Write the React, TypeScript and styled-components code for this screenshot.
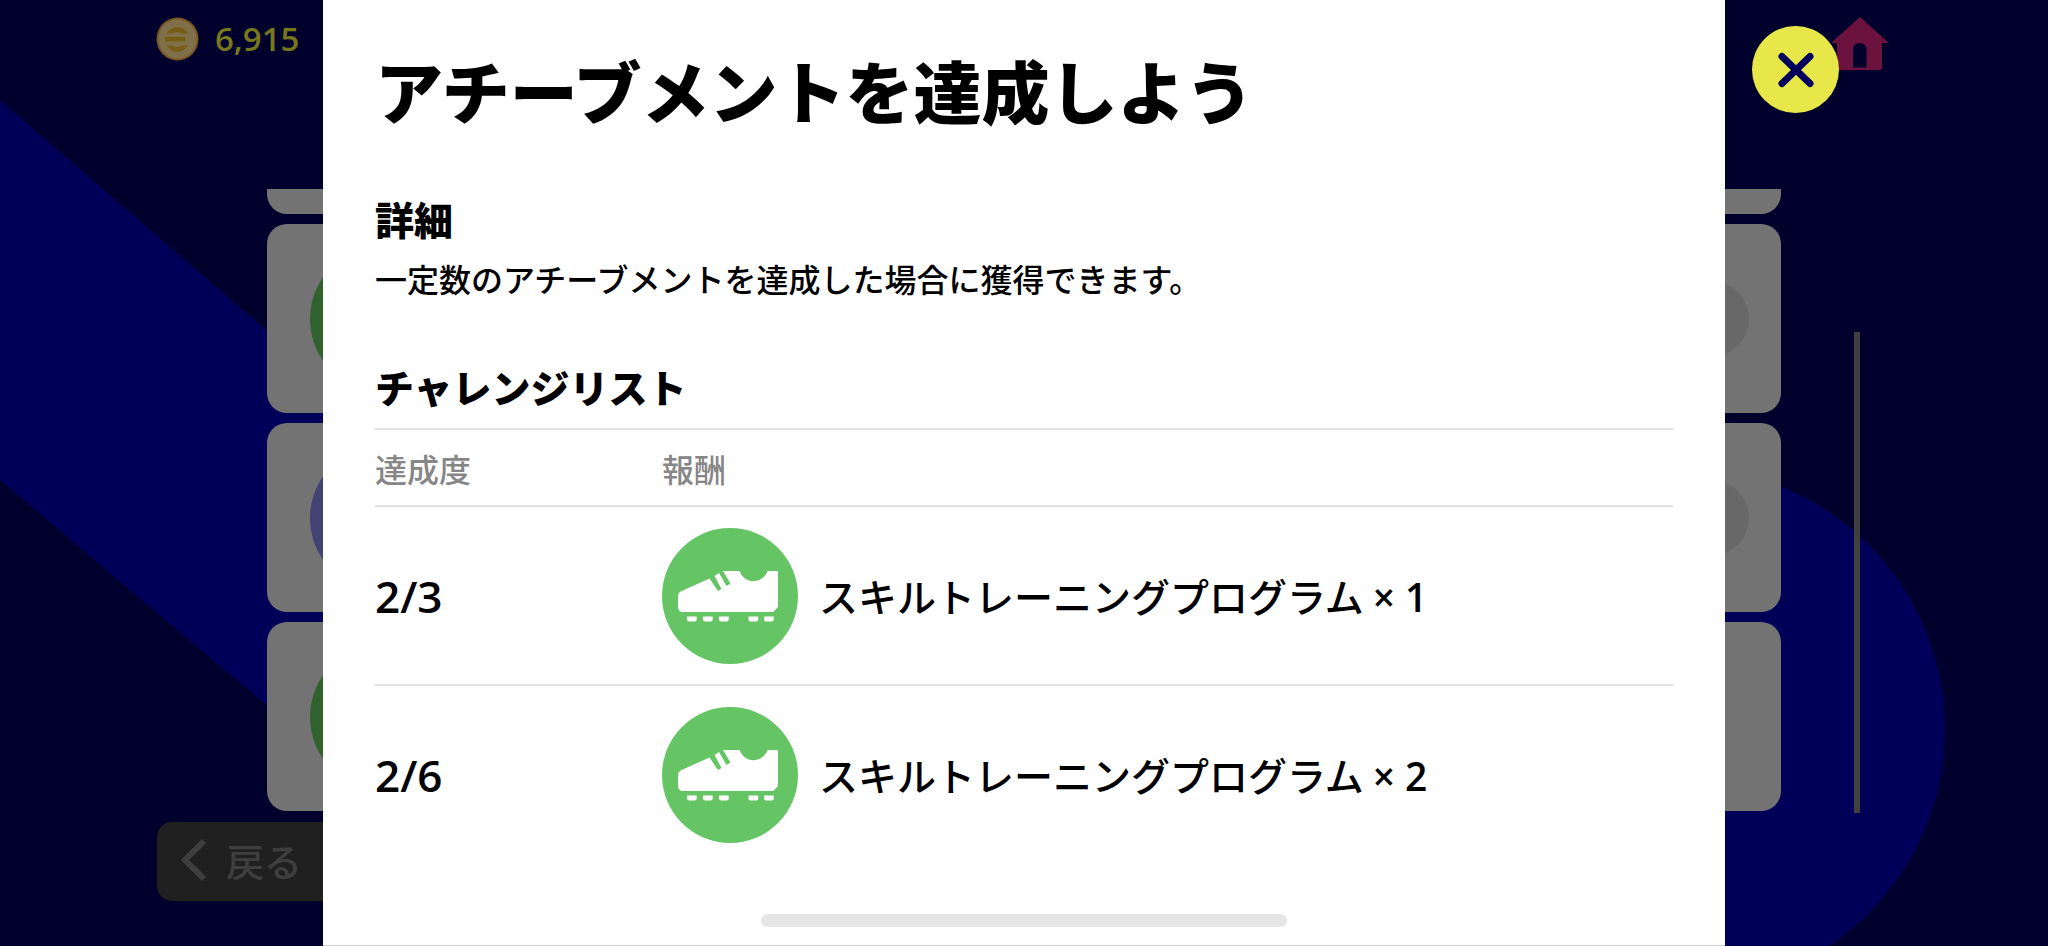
import React from "react";
import styled, { createGlobalStyle } from "styled-components";

const jp = `"Noto Sans CJK JP", sans-serif`;
const latin = `"Open Sans", "Noto Sans CJK JP", sans-serif`;

const GlobalStyle = createGlobalStyle`
  *, *::before, *::after { box-sizing: border-box; }
  body { margin: 0; background: #00002c; font-family: ${jp}; }
  h1, h2, p { margin: 0; }
`;

const Screen = styled.div`
  position: relative;
  min-height: 100vh;
  display: flex;
  flex-direction: column;
  overflow: hidden;
  background: #00002c;
`;

const Backdrop = styled.svg`
  position: absolute;
  inset: 0;
  width: 100%;
  height: 100%;
`;

const TopBar = styled.header`
  position: relative;
  display: flex;
  justify-content: space-between;
  align-items: flex-start;
  height: 189px;
  padding: 17px 159px 0 156px;
`;

const Balance = styled.div`
  display: flex;
  align-items: center;
  gap: 16px;
  height: 44px;
  color: #77771c;
  font: 600 33px/44px ${latin};
`;

const HomeLink = styled.a`
  display: block;
  height: 53px;
`;

const ListArea = styled.main`
  position: relative;
  flex: 1;
  display: flex;
  align-items: flex-end;
  min-height: 624px;
  padding: 0 188px 0 267px;
`;

const CardList = styled.ul`
  flex: 1;
  display: flex;
  flex-direction: column;
  justify-content: flex-end;
  gap: 10px;
  height: 622px;
  margin: 0 73px 2px 0;
  padding: 0;
  list-style: none;
  overflow: clip;
`;

const Card = styled.li`
  flex: none;
  display: flex;
  justify-content: space-between;
  align-items: center;
  height: 189px;
  padding: 0 32px 0 43px;
  border-radius: 20px;
  background: #737373;
`;

const Dot = styled.span<{ $size: number; $color: string }>`
  width: ${(p) => p.$size}px;
  height: ${(p) => p.$size}px;
  border-radius: 50%;
  background: ${(p) => p.$color};
`;

const ScrollThumb = styled.div`
  width: 6px;
  height: 481px;
  background: #404040;
`;

const BottomBar = styled.footer`
  position: relative;
  padding: 9px 157px 45px;
`;

const BackButton = styled.button`
  display: flex;
  align-items: center;
  gap: 20px;
  width: 240px;
  height: 79px;
  padding: 0 0 4px 24px;
  border: 0;
  border-radius: 15px;
  background: #202020;
  color: #3e3e3e;
  font: 500 38px/56px ${jp};
`;

const Overlay = styled.div`
  position: absolute;
  inset: 0;
  display: grid;
  grid-template-columns: 1fr minmax(0, 1402px) 1fr;
`;

const Dialog = styled.section`
  grid-column: 2;
  min-height: 100%;
  padding: 40px 52px 0;
  border-bottom: 1px solid #cfcfcf;
  background: #fff;
  color: #000;
`;

const Title = styled.h1`
  font: 900 68px/100px ${jp};
`;

const Heading = styled.h2`
  font: 900 39px/56px ${jp};
`;

const Section = styled.div<{ $gap: number }>`
  margin-top: ${(p) => p.$gap}px;
`;

const Text = styled.p`
  margin-top: 8px;
  font: 500 32px/48px ${jp};
`;

const RewardTable = styled.table`
  width: 100%;
  margin-top: 14px;
  border-collapse: collapse;

  th,
  td {
    padding: 0;
    border-top: 2px solid #e0e0e0;
    text-align: left;
  }
`;

const HeadCell = styled.th<{ $width?: number }>`
  width: ${(p) => (p.$width ? `${p.$width}px` : "auto")};
  height: 77px;
  color: #868686;
  font: 500 32px/48px ${jp};
`;

const ProgressCell = styled.td`
  height: 179px;
  font: 600 44px/56px ${latin};
`;

const Reward = styled.div`
  display: flex;
  align-items: center;
  gap: 21px;
  font: 500 39px/56px ${jp};
`;

const Count = styled.span`
  font-family: ${latin};
  font-weight: 600;
`;

const CloseButton = styled.button`
  display: grid;
  place-items: center;
  width: 87px;
  height: 87px;
  margin: 26px 0 0 27px;
  padding: 0;
  border: 0;
  border-radius: 50%;
  background: #e7e74a;
`;

const HomeIndicator = styled.div`
  position: absolute;
  left: 50%;
  bottom: 19px;
  width: 526px;
  height: 13px;
  transform: translateX(-50%);
  border-radius: 7px;
  background: #e6e6e6;
`;

const CoinIcon = () => (
  <svg width="43" height="44" viewBox="0 0 43 44" aria-hidden="true">
    <ellipse cx="21.5" cy="22" rx="21" ry="21.5" fill="#7a5722" />
    <ellipse cx="21.5" cy="22" rx="19" ry="19.5" fill="#80704a" />
    <g fill="#755d14">
      <path d="M10.500 16.500Q15 10 21 10Q28 10 32 16.500H26Q21 13.500 16 16.500Z" />
      <path d="M9 20H29V24.500H9Z" />
      <path d="M10.500 28.500Q15 35 21 35Q28 35 32 28.500H26Q21 31.500 16 28.500Z" />
    </g>
  </svg>
);

const HomeIcon = () => (
  <svg width="58" height="53" viewBox="0 0 58 53" aria-hidden="true">
    <path
      fill="#6b123f"
      fillRule="evenodd"
      d="M29 0L58 26H51V51q0 2-2 2H8q-2 0-2-2V26H0ZM22 50.500H35.500V33q0-7-6.750-7t-6.750 7Z"
    />
  </svg>
);

const ChevronIcon = () => (
  <svg width="25" height="44" viewBox="0 0 25 44" aria-hidden="true">
    <path d="M23 3L4 22L23 41" fill="none" stroke="#3e3e3e" strokeWidth="6" />
  </svg>
);

const CloseIcon = () => (
  <svg width="36" height="36" viewBox="0 0 36 36" aria-hidden="true">
    <path
      d="M4 4.500L32 31.500M32 4.500L4 31.500"
      fill="none"
      stroke="#00005c"
      strokeWidth="7"
      strokeLinecap="round"
    />
  </svg>
);

const BootIcon = () => (
  <svg width="136" height="136" viewBox="0 0 136 136" aria-hidden="true">
    <circle cx="68" cy="68" r="68" fill="#65c565" />
    <g fill="#fff">
      <path d="M18.500 63.500L47.500 50.500L56 63L59.500 61L52.500 48L57 45L64.500 58L68.500 55.500L61 43H77.500C80 49 85 53.300 91.500 53.300C98 53.300 103 49 105.700 43H116V79L111 84H21Q16 84 16 79V68Q16 65 18.500 63.500Z" />
      {[25, 41, 57, 86.500, 102].map((x) => (
        <path key={x} d={`M${x} 88.500h9.700v3q0 2-2 2h-5.700q-2 0-2-2z`} />
      ))}
    </g>
  </svg>
);

const cards = [
  { icon: null, badge: false },
  { icon: "#2f622f", badge: true },
  { icon: "#424273", badge: true },
  { icon: "#2f622f", badge: false },
];

const challenges = [
  { progress: "2/3", reward: "スキルトレーニングプログラム", count: 1 },
  { progress: "2/6", reward: "スキルトレーニングプログラム", count: 2 },
];

export default function App() {
  return (
    <>
      <GlobalStyle />
      <Screen>
        <Backdrop viewBox="0 0 2048 946" preserveAspectRatio="none" aria-hidden="true">
          <path fill="#000058" d="M0 100L700 705H1685V946H551L0 480Z" />
          <circle cx="1684" cy="729" r="261" fill="#000058" />
        </Backdrop>
        <TopBar>
          <Balance>
            <CoinIcon />
            6,915
          </Balance>
          <HomeLink href="#home" aria-label="ホーム">
            <HomeIcon />
          </HomeLink>
        </TopBar>
        <ListArea>
          <CardList>
            {cards.map((card, i) => (
              <Card key={i}>
                {card.icon && <Dot $size={148} $color={card.icon} />}
                {card.badge && <Dot $size={76} $color="#686868" />}
              </Card>
            ))}
          </CardList>
          <ScrollThumb />
        </ListArea>
        <BottomBar>
          <BackButton type="button">
            <ChevronIcon />
            戻る
          </BackButton>
        </BottomBar>
        <Overlay>
          <Dialog role="dialog" aria-labelledby="dialog-title">
            <Title id="dialog-title">アチーブメントを達成しよう</Title>
            <Section $gap={50}>
              <Heading>詳細</Heading>
              <Text>一定数のアチーブメントを達成した場合に獲得できます。</Text>
            </Section>
            <Section $gap={56}>
              <Heading>チャレンジリスト</Heading>
              <RewardTable>
                <thead>
                  <tr>
                    <HeadCell scope="col" $width={287}>達成度</HeadCell>
                    <HeadCell scope="col">報酬</HeadCell>
                  </tr>
                </thead>
                <tbody>
                  {challenges.map((c) => (
                    <tr key={c.progress}>
                      <ProgressCell>{c.progress}</ProgressCell>
                      <td>
                        <Reward>
                          <BootIcon />
                          <span>
                            {c.reward} <Count>× {c.count}</Count>
                          </span>
                        </Reward>
                      </td>
                    </tr>
                  ))}
                </tbody>
              </RewardTable>
            </Section>
          </Dialog>
          <CloseButton type="button" aria-label="閉じる">
            <CloseIcon />
          </CloseButton>
          <HomeIndicator />
        </Overlay>
      </Screen>
    </>
  );
}
